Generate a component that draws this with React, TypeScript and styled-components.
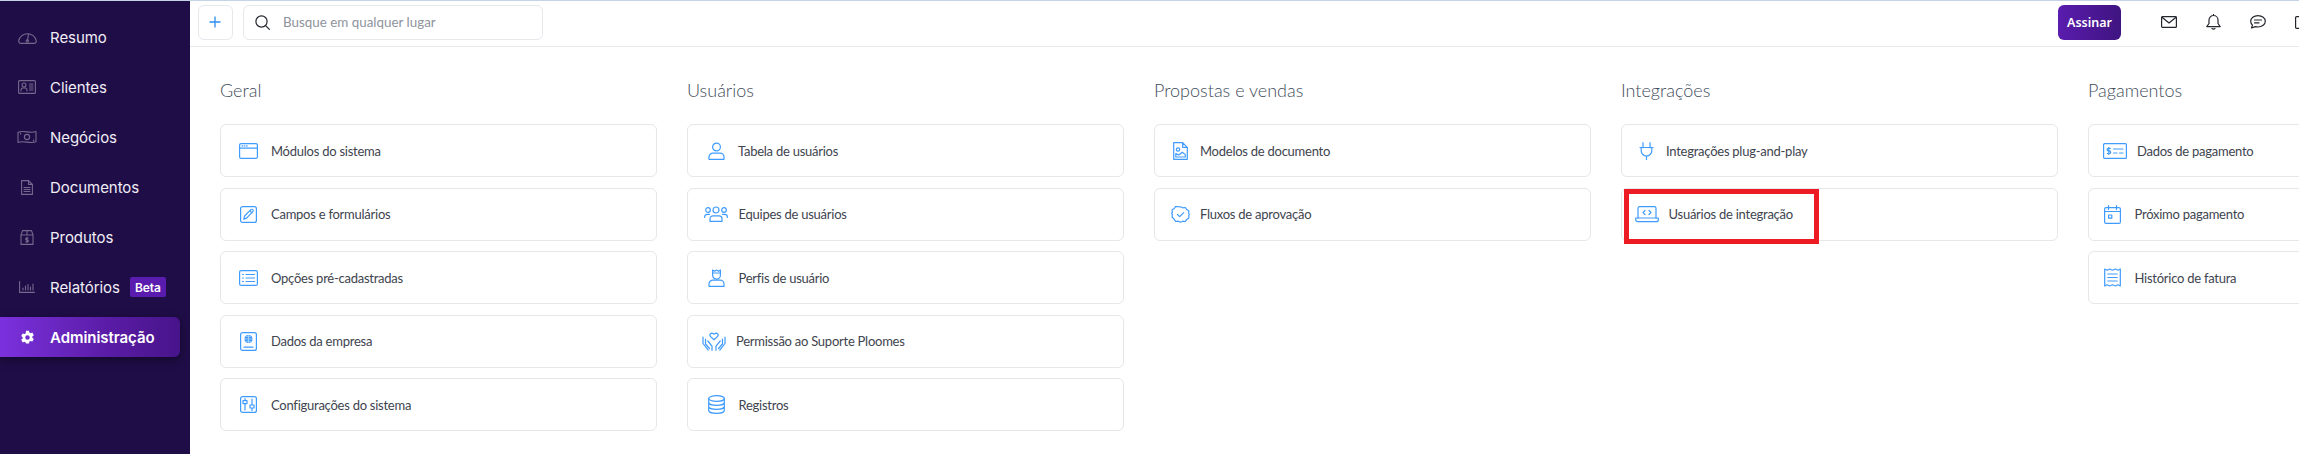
import React from "react";
import styled, { createGlobalStyle } from "styled-components";

const Global = createGlobalStyle`
  html, body { margin: 0; padding: 0; width: 2299px; height: 454px; overflow: hidden; background: #fff; }
  * { box-sizing: border-box; }
`;

const Page = styled.div`
  width: 2299px; height: 454px; overflow: hidden; display: flex; flex-direction: column;
  border-top: 1px solid #c6d2e6; background: #fff;
`;
const Body = styled.div`display: flex; flex: 1; min-height: 0;`;
const Sidebar = styled.nav`
  width: 190px; flex-shrink: 0; background: #1f0d47; padding-top: 16px;
  display: flex; flex-direction: column; gap: 10px;
`;
const NavItem = styled.div<{ $active?: boolean }>`
  width: 180px; height: 40px; display: flex; align-items: center; border-radius: 0 6px 6px 0;
  font-family: Inter, "Liberation Sans", sans-serif; font-size: 15px; letter-spacing: -.05px;
  font-weight: ${(p) => (p.$active ? 600 : 400)}; color: ${(p) => (p.$active ? "#fff" : "#f0edf6")};
  background: ${(p) => (p.$active ? "linear-gradient(90deg,#7b31dd 0%,#5a1ca6 60%,#47148a 100%)" : "transparent")};
  box-shadow: ${(p) => (p.$active ? "0 3px 8px rgba(0,0,0,.4)" : "none")};
`;
const NavIcon = styled.span`width: 54px; flex-shrink: 0; display: flex; justify-content: center; margin-right: -4px;`;
const Beta = styled.span`
  margin-left: 10px; width: 36px; height: 20px; border-radius: 2px; background: #5a1cae; color: #fff;
  font-size: 12px; font-weight: 600; display: flex; align-items: center; justify-content: center;
`;
const Content = styled.div`flex: 1; min-width: 0; display: flex; flex-direction: column;`;
const Header = styled.header`
  height: 46px; flex-shrink: 0; border-bottom: 1px solid #e9e9ec; display: flex; align-items: center;
  padding: 0 0 3px 8px;
`;
const PlusButton = styled.button`
  width: 35px; height: 35px; background: #fff; border: 1px solid #e6e8ec; border-radius: 6px; padding: 0 2px 0 0;
  display: flex; align-items: center; justify-content: center; flex-shrink: 0;
`;
const Search = styled.div`
  width: 300px; height: 35px; margin-left: 10px; border: 1px solid #e6e8ec; border-radius: 6px;
  display: flex; align-items: center; padding-left: 11px; flex-shrink: 0;
  font-family: Lato, sans-serif; font-size: 13.4px; color: #8e939c;
`;
const SearchText = styled.span`margin-left: 13px;`;
const Subscribe = styled.button`
  width: 63px; height: 35px; margin-left: 1515px; flex-shrink: 0; border: 0; border-radius: 6px; padding: 0;
  background: linear-gradient(90deg,#5a1cae,#3f1480); color: #fff;
  font-family: "Noto Sans", sans-serif; font-size: 12.5px; font-weight: 600;
`;
const HeaderIcons = styled.div`display: flex; align-items: center; gap: 29px; margin-left: 40px; flex-shrink: 0;`;
const Columns = styled.main`
  flex: 1; min-height: 0; display: flex; gap: 30px; padding: 0 0 0 30px; overflow: hidden;
`;
const Column = styled.section`width: 437px; flex-shrink: 0; padding-top: 30px;`;
const Heading = styled.h2`
  margin: 0 0 21px; height: 26px; line-height: 26px; font-family: Lato, sans-serif; font-weight: 300;
  font-size: 18px; color: #434d5b;
`;
const Card = styled.div`
  position: relative; height: 53px; margin-bottom: 10.5px; background: #fff; border: 1px solid #e7e7e9; border-radius: 6px;
  display: flex; align-items: center; font-family: Lato, sans-serif; font-size: 13px; letter-spacing: -.25px; color: #40444e;
`;
const IconSlot = styled.span<{ $center: number; $text: number }>`
  width: ${(p) => p.$center * 2}px; margin-right: ${(p) => p.$text - p.$center * 2}px;
  flex-shrink: 0; display: flex; justify-content: center; margin-left: -1px;
`;
const Highlight = styled.div`
  position: absolute; left: 2px; top: 0; width: 195px; height: 55px; border: 5px solid #ed1c24;
`;
const BlueSvg = styled.svg`display: block; fill: none; stroke: #3f9bfd; stroke-width: 1.2; stroke-linecap: round; stroke-linejoin: round;`;
const GraySvg = styled.svg`display: block; fill: none; stroke: #75698e; stroke-width: 1.1; stroke-linecap: round; stroke-linejoin: round;`;
const DarkSvg = styled.svg`display: block; fill: none; stroke: #23262c; stroke-width: 1.2; stroke-linecap: round; stroke-linejoin: round;`;

type Sz = { w: number; h: number; children: React.ReactNode };
const B = ({ w, h, children }: Sz) => <BlueSvg width={w} height={h} viewBox={`0 0 ${w} ${h}`}>{children}</BlueSvg>;
const G = ({ w, h, children }: Sz) => <GraySvg width={w} height={h} viewBox={`0 0 ${w} ${h}`}>{children}</GraySvg>;
const D = ({ w, h, children }: Sz) => <DarkSvg width={w} height={h} viewBox={`0 0 ${w} ${h}`}>{children}</DarkSvg>;

const icons = {
  modules: <B w={19} h={16}><rect x=".6" y=".6" width="17.8" height="14.8" rx="1.5" /><path d="M.6 5.2h17.8M3 2.9h.6M5.3 2.9h.6M7.6 2.9h.6" /></B>,
  fields: <B w={17} h={17}><rect x=".6" y=".6" width="15.8" height="15.8" rx="2" /><path d="M3.8 13.2l.8-3.2 6.2-6.3a1.3 1.3 0 0 1 2 2l-6.2 6.4zM10 4.8l2 2" /></B>,
  options: <B w={19} h={16}><rect x=".6" y=".6" width="17.8" height="14.8" rx="1.5" /><path d="M3.5 4.5h1M3.5 8h1M3.5 11.5h1M7 4.5h8.5M7 8h8.5M7 11.5h8.5" /></B>,
  company: <B w={17} h={19}><rect x=".6" y=".6" width="15.8" height="17.8" rx="2" /><circle cx="8.5" cy="7" r="4" fill="#3f9bfd" stroke="none" /><path d="M4.5 7h8M8.5 3v8M6 4.2c1.6.8 3.4.8 5 0M6 9.8c1.6-.8 3.4-.8 5 0" stroke="#cfe5ff" strokeWidth=".6" /><path d="M4 15.2h9" /></B>,
  config: <B w={17} h={17}><rect x=".6" y=".6" width="15.8" height="15.8" rx="2" /><path d="M5 2.5v11.5M12 3v11.5" /><rect x="3" y="4.6" width="4" height="3" fill="#fff" /><rect x="10" y="9" width="4" height="3" fill="#fff" /></B>,
  user: <B w={17} h={18}><circle cx="8.5" cy="5" r="3.9" /><path d="M1 17.3v-2.2a4 4 0 0 1 4-4h7a4 4 0 0 1 4 4v2.2z" /></B>,
  team: <B w={24} h={16}><circle cx="12" cy="4" r="3" /><circle cx="4" cy="4" r="2.3" /><circle cx="20" cy="4" r="2.3" /><path d="M6 15.4v-2.6a3 3 0 0 1 3-3h6a3 3 0 0 1 3 3v2.6zM.7 11.5v-.8a2.4 2.4 0 0 1 2.4-2.4h2.4M23.3 11.5v-.8a2.4 2.4 0 0 0-2.4-2.4h-2.4" /></B>,
  profile: <B w={17} h={18}><path d="M4.6 1l2 1.3L8.5 1l1.9 1.3L12.4 1v5.2a3.9 3.9 0 0 1-7.8 0zM4.6 4h7.8" /><path d="M1 17.3v-2.2a4 4 0 0 1 4-4h7a4 4 0 0 1 4 4v2.2z" /></B>,
  hands: <B w={24} h={19}><path d="M12 7.8L8.6 4.6a2 2 0 0 1 2.8-2.9l.6.5.6-.5a2 2 0 0 1 2.8 2.9z" /><path d="M1 5v6.5l5.2 6.6M3.5 7v5l4 4.5M5.8 9l4.2 5.2v4M23 5v6.5l-5.2 6.6M20.5 7v5l-4 4.5M18.2 9L14 14.2v4" /></B>,
  database: <B w={17} h={19}><ellipse cx="8.5" cy="3.5" rx="7.8" ry="2.9" /><path d="M.7 3.5v12c0 1.6 3.5 2.9 7.8 2.9s7.8-1.3 7.8-2.9v-12M.7 7.5c0 1.6 3.5 2.9 7.8 2.9s7.8-1.3 7.8-2.9M.7 11.5c0 1.6 3.5 2.9 7.8 2.9s7.8-1.3 7.8-2.9" /></B>,
  docImage: <B w={15} h={18}><path d="M.7.7h9l4.6 4.6v12H.7zM9.7.7v4.6h4.6" /><circle cx="5" cy="7.5" r="1.7" /><path d="M2.8 15v-3.4l3 1.4 3.5-2.8 3 2.4V15z" /></B>,
  badge: <B w={19} h={17}><path d="M9.5.8l2.3 1 2.6-.3 1.3 2.1 2.2 1.3-.2 2.6.7 1-.7 1 .2 2.6-2.2 1.3-1.3 2.1-2.6-.3-2.3 1-2.3-1-2.6.3-1.3-2.1L1.1 11l.2-2.6-.7-1 .7-1-.2-2.6 2.2-1.3 1.3-2.1 2.6.3z" /><path d="M6.5 8.5l2.2 2.2 4-4" /></B>,
  plug: <B w={15} h={18}><path d="M4 .7v5M11 .7v5M1 5.5h13M2.2 5.5v3.3a5.3 5.3 0 0 0 10.6 0V5.5M7.5 14v3.5" /></B>,
  laptop: <B w={24} h={17}><path d="M3 12V2.2A1.5 1.5 0 0 1 4.5.7h15A1.5 1.5 0 0 1 21 2.2V12" /><path d="M.7 12h22.6v1.7a2 2 0 0 1-2 2H2.7a2 2 0 0 1-2-2z" /><path d="M10 4.5L8 6.5l2 2M14 4.5l2 2-2 2" /></B>,
  payment: <B w={24} h={16}><rect x=".6" y=".6" width="22.8" height="14.8" rx="1" /><path d="M7.3 5.3H5.4a1.2 1.2 0 0 0 0 2.6h1a1.2 1.2 0 0 1 0 2.6H4.3M5.8 4.4v7M10.5 6h9.5M10.5 10h3.5M16.5 10h3.5" /></B>,
  calendar: <B w={17} h={19}><rect x=".6" y="2.6" width="15.8" height="15.8" rx="1.5" /><path d="M4.5.6v4M12.5.6v4M.6 6.5h15.8" /><rect x="4.6" y="10" width="3.2" height="3.2" /></B>,
  receipt: <B w={17} h={19}><path d="M.7 1l2.5 1.2L5.7 1l2.8 1.2L11.3 1l2.5 1.2L16.3 1v17l-2.5-1.2-2.5 1.2-2.8-1.2L5.7 18l-2.5-1.2L.7 18z" /><path d="M3.8 6h9.4M3.8 9.5h9.4M3.8 13h9.4" /></B>,
};

type CardData = { label: string; icon: keyof typeof icons; center: number; text: number; mark?: boolean };
const columns: { title: string; cards: CardData[] }[] = [
  { title: "Geral", cards: [
    { label: "Módulos do sistema", icon: "modules", center: 28, text: 51 },
    { label: "Campos e formulários", icon: "fields", center: 28, text: 51 },
    { label: "Opções pré-cadastradas", icon: "options", center: 28, text: 51 },
    { label: "Dados da empresa", icon: "company", center: 28, text: 51 },
    { label: "Configurações do sistema", icon: "config", center: 28, text: 51 },
  ] },
  { title: "Usuários", cards: [
    { label: "Tabela de usuários", icon: "user", center: 29, text: 51 },
    { label: "Equipes de usuários", icon: "team", center: 29, text: 51.5 },
    { label: "Perfis de usuário", icon: "profile", center: 29, text: 51.5 },
    { label: "Permissão ao Suporte Ploomes", icon: "hands", center: 27, text: 49 },
    { label: "Registros", icon: "database", center: 29, text: 51.5 },
  ] },
  { title: "Propostas e vendas", cards: [
    { label: "Modelos de documento", icon: "docImage", center: 26, text: 46 },
    { label: "Fluxos de aprovação", icon: "badge", center: 26, text: 46 },
  ] },
  { title: "Integrações", cards: [
    { label: "Integrações plug-and-play", icon: "plug", center: 25, text: 45 },
    { label: "Usuários de integração", icon: "laptop", center: 26, text: 47.5, mark: true },
  ] },
  { title: "Pagamentos", cards: [
    { label: "Dados de pagamento", icon: "payment", center: 27, text: 49 },
    { label: "Próximo pagamento", icon: "calendar", center: 24, text: 46.5 },
    { label: "Histórico de fatura", icon: "receipt", center: 24, text: 46.5 },
  ] },
];

const nav = [
  { label: "Resumo", icon: <G w={19} h={14}><path d="M3 13.4h13a2.3 2.3 0 0 0 2.3-2.6A9 9 0 0 0 .7 10.8 2.3 2.3 0 0 0 3 13.4z" /><path d="M10.5 4l-1 6.5" /><circle cx="9.3" cy="11" r="1.2" /></G> },
  { label: "Clientes", icon: <G w={18} h={14}><rect x=".6" y=".6" width="16.8" height="12.8" rx="1" /><circle cx="6" cy="5" r="2" /><path d="M3 11v-1a2 2 0 0 1 2-2h2a2 2 0 0 1 2 2v1M11.5 4h3.5M11.5 6h3.5M11.5 8h3.5M11.5 10h3.5" /></G> },
  { label: "Negócios", icon: <G w={20} h={14}><path d="M1 2.2c6-2.2 12 1.6 18-.6v10.2c-6 2.2-12-1.6-18 .6z" /><circle cx="10" cy="7" r="2.6" /><path d="M3.5 3v1M16.5 10v1" /></G> },
  { label: "Documentos", icon: <G w={12} h={15}><path d="M.6.6h7l3.8 3.8v10H.6zM7.6.6v3.8h3.8M3 7.5h6M3 9.5h6M3 11.5h6" /></G> },
  { label: "Produtos", icon: <G w={14} h={15}><path d="M1 5h12v9.4H1zM1 5l1.5-4.4h9L13 5M7 .6V5M1 5" /><path d="M8.2 8H6.6a.9.9 0 0 0 0 1.9h.8a.9.9 0 0 1 0 1.9H5.8M7 7.2v5.4" /></G> },
  { label: "Relatórios", icon: <G w={16} h={12}><path d="M.6.6v10.8h14.8M4 9V7M6.5 9V5M9 9V3.5M11.5 9V6M14 9V3" /></G>, beta: true },
];

const Gear = () => (
  <svg width="15" height="15" viewBox="0 0 24 24" fill="#fff"><path fillRule="evenodd" d="M14.4 1l.6 3.1 1.7 1 3-1 2.4 4.2-2.4 2 0 2 2.4 2-2.4 4.2-3-1-1.7 1-.6 3.1H9.6L9 19.9l-1.7-1-3 1L1.9 15.7l2.4-2 0-2-2.4-2 2.4-4.2 3 1 1.7-1L9.6 1zM12 8.4a3.6 3.6 0 1 0 0 7.2 3.6 3.6 0 0 0 0-7.2z" /></svg>
);

export default function App() {
  return (
    <Page>
      <Global />
      <Body>
        <Sidebar>
          {nav.map((n) => (
            <NavItem key={n.label}>
              <NavIcon>{n.icon}</NavIcon>
              {n.label}
              {n.beta && <Beta>Beta</Beta>}
            </NavItem>
          ))}
          <NavItem $active>
            <NavIcon><Gear /></NavIcon>
            Administração
          </NavItem>
        </Sidebar>
        <Content>
          <Header>
            <PlusButton>
              <svg width="12" height="12" viewBox="0 0 12 12" fill="none" stroke="#2f8fef" strokeWidth="1.3"><path d="M6 .5v11M.5 6h11" /></svg>
            </PlusButton>
            <Search>
              <D w={15} h={15}><circle cx="6.5" cy="6.5" r="5.6" /><path d="M10.6 10.6l3.8 3.8" /></D>
              <SearchText>Busque em qualquer lugar</SearchText>
            </Search>
            <Subscribe>Assinar</Subscribe>
            <HeaderIcons>
              <D w={16} h={12}><rect x=".6" y=".6" width="14.8" height="10.8" rx="1" /><path d="M1 1.2l7 5.8 7-5.8" /></D>
              <D w={15} h={16}><path d="M7.5 1.5a4.5 4.5 0 0 0-4.5 4.5v3.5L.8 12.6h13.4L12 9.5V6a4.5 4.5 0 0 0-4.5-4.5zM6 14.6c1 .6 2 .6 3 0M7.5.4v1" /></D>
              <D w={16} h={14}><path d="M8 .7c4.1 0 7.3 2.5 7.3 5.6S12.1 12 8 12c-.9 0-1.8-.1-2.6-.4L1.5 13l1-2.9C1.4 9.1.7 7.8.7 6.3.7 3.2 3.9.7 8 .7zM4.5 5h7M4.5 7.8h4.5" /></D>
              <D w={15} h={13}><rect x=".6" y=".6" width="13" height="11.8" rx="1" /></D>
            </HeaderIcons>
          </Header>
          <Columns>
            {columns.map((c) => (
              <Column key={c.title}>
                <Heading>{c.title}</Heading>
                {c.cards.map((card) => (
                  <Card key={card.label}>
                    <IconSlot $center={card.center} $text={card.text}>{icons[card.icon]}</IconSlot>
                    {card.label}
                    {card.mark && <Highlight />}
                  </Card>
                ))}
              </Column>
            ))}
          </Columns>
        </Content>
      </Body>
    </Page>
  );
}
